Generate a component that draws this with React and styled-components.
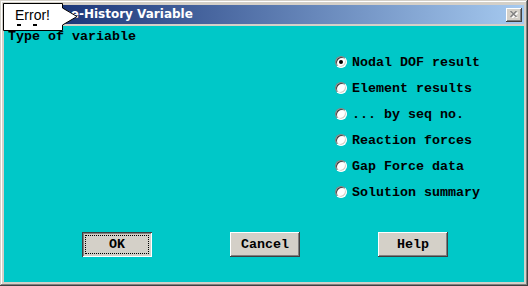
import React from 'react';
import styled, { createGlobalStyle, css } from 'styled-components';

const GlobalStyle = createGlobalStyle`
  html, body {
    margin: 0;
    padding: 0;
    background: #d4d0c8;
    overflow: hidden;
  }
`;

const Window = styled.div`
  position: relative;
  box-sizing: border-box;
  width: 528px;
  height: 286px;
  padding: 5px 4px 4px 4px;
  display: flex;
  flex-direction: column;
  background: #d4d0c8;
  box-shadow: inset -1px -1px #404040, inset 1px 1px #d4d0c8,
    inset -2px -2px #808080, inset 2px 2px #ffffff;
`;

const TitleBar = styled.div`
  height: 19px;
  display: flex;
  align-items: center;
  padding: 0 2px 0 42px;
  background: linear-gradient(to right, #0a246a, #a6caf0);
`;

const TitleText = styled.span`
  flex: 1;
  color: #fff;
  font-family: 'DejaVu Sans', sans-serif;
  font-weight: bold;
  font-size: 12px;
  line-height: 19px;
  white-space: nowrap;
`;

const CaptionButton = styled.div`
  width: 16px;
  height: 14px;
  display: flex;
  align-items: center;
  justify-content: center;
  background: #d4d0c8;
  box-shadow: inset -1px -1px #404040, inset 1px 1px #ffffff,
    inset -2px -2px #808080;
`;

const Content = styled.div`
  margin-top: 2px;
  flex: 1;
  display: flex;
  flex-direction: column;
  padding: 3px 0 0 4px;
  background: #00c8c8;
  font-family: 'Liberation Mono', monospace;
  font-weight: bold;
  font-size: 13.33px;
  color: #000;
`;

const Heading = styled.div`
  line-height: 16px;
  height: 16px;
`;

const RadioGroup = styled.div`
  margin: 4px 0 0 327px;
  display: flex;
  flex-direction: column;
`;

const RadioRow = styled.label`
  height: 26px;
  display: flex;
  align-items: center;
  gap: 5px;
  white-space: pre;
`;

const RadioCircle = styled.span`
  position: relative;
  box-sizing: border-box;
  width: 12px;
  height: 12px;
  border-radius: 50%;
  background: #fff;
  border: 1px solid;
  border-color: #808080 #ffffff #ffffff #808080;
  box-shadow: inset 1px 1px #404040, inset -1px -1px #d4d0c8;
  ${p =>
    p.checked &&
    css`
      &::after {
        content: '';
        position: absolute;
        left: 3px;
        top: 3px;
        width: 4px;
        height: 4px;
        border-radius: 50%;
        background: #000;
      }
    `}
`;

const ButtonRow = styled.div`
  margin-top: 27px;
  display: flex;
  justify-content: center;
  gap: 78px;
  padding-right: 2px;
`;

const Button = styled.div`
  position: relative;
  box-sizing: border-box;
  width: 70px;
  height: 25px;
  display: flex;
  align-items: center;
  justify-content: center;
  background: #d4d0c8;
  line-height: 16px;
  white-space: pre;
  box-shadow: inset -1px -1px #404040, inset 1px 1px #ffffff,
    inset -2px -2px #808080;
  ${p =>
    p.isDefault &&
    css`
      box-shadow: inset 1px 1px #404040, inset -1px -1px #ffffff,
        inset 2px 2px #808080;
      &::after {
        content: '';
        position: absolute;
        left: 3px;
        top: 3px;
        right: 3px;
        bottom: 3px;
        border: 1px dotted #000;
      }
    `}
`;

const Tooltip = styled.div`
  position: absolute;
  left: 0;
  top: 0;
  width: 80px;
  height: 32px;
`;

const TooltipText = styled.span`
  position: absolute;
  left: 15px;
  top: 7px;
  font-family: 'Liberation Sans', Arial, sans-serif;
  font-size: 14px;
  line-height: 16px;
  color: #000;
`;

const options = [
  'Nodal DOF result',
  'Element results',
  '... by seq no.',
  'Reaction forces',
  'Gap Force data',
  'Solution summary',
];

export default function App() {
  return (
    <>
      <GlobalStyle />
      <Window>
        <TitleBar>
          <TitleText>Time-History Variable</TitleText>
          <CaptionButton>
            <svg width="8" height="7" viewBox="0 0 8 7">
              <path d="M1 1 L7 7 M7 1 L1 7" stroke="#ffffff" strokeWidth="1.4" transform="translate(0.6 0.6)" />
              <path d="M0.5 0 L6.5 6 M6.5 0 L0.5 6" stroke="#808080" strokeWidth="1.4" />
            </svg>
          </CaptionButton>
        </TitleBar>
        <Content>
          <Heading>Type of variable</Heading>
          <RadioGroup>
            {options.map((o, i) => (
              <RadioRow key={o}>
                <RadioCircle checked={i === 0} />
                {o}
              </RadioRow>
            ))}
          </RadioGroup>
          <ButtonRow>
            <Button isDefault>OK</Button>
            <Button>Cancel</Button>
            <Button>Help</Button>
          </ButtonRow>
        </Content>
        <Tooltip>
          <svg width="80" height="32" viewBox="0 0 80 32">
            <polygon
              points="3.5,3.5 62.5,3.5 62.5,8 77,16.5 62.5,25 62.5,30.5 3.5,30.5"
              fill="#ffffff"
              stroke="#000000"
              strokeWidth="1"
            />
            <rect x="17" y="24" width="4" height="2" fill="#000" />
            <rect x="33" y="24" width="4" height="2" fill="#000" />
          </svg>
          <TooltipText>Error!</TooltipText>
        </Tooltip>
      </Window>
    </>
  );
}
